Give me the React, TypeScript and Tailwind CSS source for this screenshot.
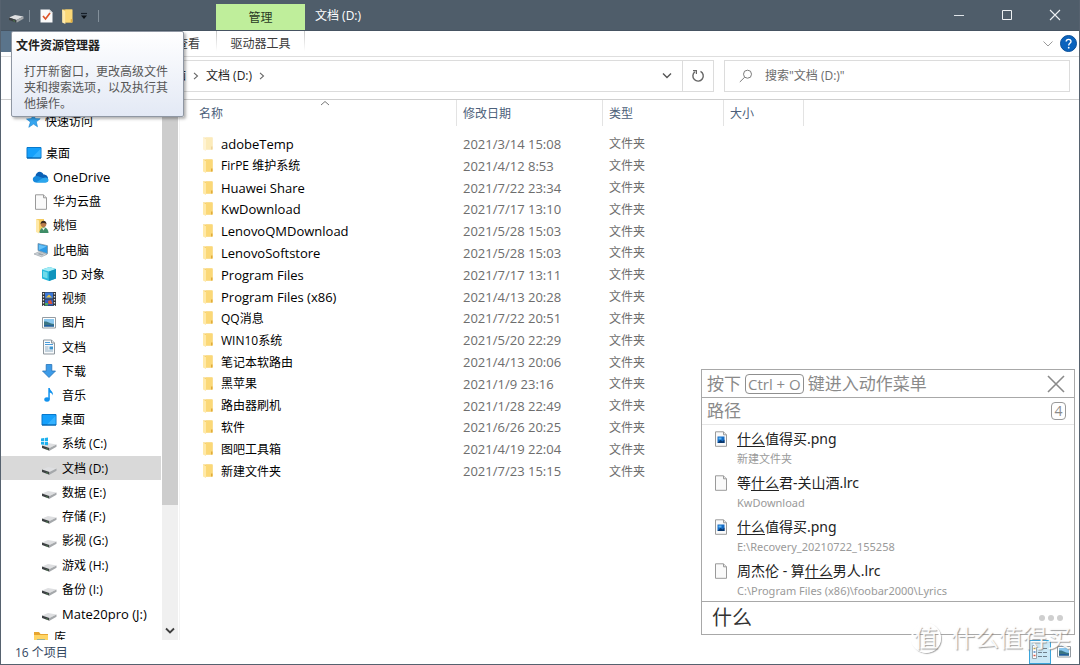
import { ReactNode } from 'react';

type NavItem = { label: string; icon: ReactNode; level: 1 | 2 | 3; latin?: boolean; active?: boolean };
type FileRow = { name: string; date: string; latin?: boolean; faded?: boolean };

const navItems: NavItem[] = [
  { label: '桌面', icon: <DesktopIcon />, level: 1 },
  { label: 'OneDrive', icon: <CloudIcon />, level: 2, latin: true },
  { label: '华为云盘', icon: <BlankFileIcon />, level: 2 },
  { label: '姚恒', icon: <UserFolderIcon />, level: 2 },
  { label: '此电脑', icon: <ComputerIcon />, level: 2 },
  { label: '3D 对象', icon: <CubeIcon />, level: 3 },
  { label: '视频', icon: <VideoIcon />, level: 3 },
  { label: '图片', icon: <PictureIcon />, level: 3 },
  { label: '文档', icon: <DocumentIcon />, level: 3 },
  { label: '下载', icon: <DownloadIcon />, level: 3 },
  { label: '音乐', icon: <MusicIcon />, level: 3 },
  { label: '桌面', icon: <DesktopIcon />, level: 3 },
  { label: '系统 (C:)', icon: <DriveIcon system />, level: 3 },
  { label: '文档 (D:)', icon: <DriveIcon />, level: 3, active: true },
  { label: '数据 (E:)', icon: <DriveIcon />, level: 3 },
  { label: '存储 (F:)', icon: <DriveIcon />, level: 3 },
  { label: '影视 (G:)', icon: <DriveIcon />, level: 3 },
  { label: '游戏 (H:)', icon: <DriveIcon />, level: 3 },
  { label: '备份 (I:)', icon: <DriveIcon />, level: 3 },
  { label: 'Mate20pro (J:)', icon: <DriveIcon />, level: 3, latin: true },
  { label: '库', icon: <LibraryIcon />, level: 2 },
];

const files: FileRow[] = [
  { name: 'adobeTemp', date: '2021/3/14 15:08', latin: true, faded: true },
  { name: 'FirPE 维护系统', date: '2021/4/12 8:53' },
  { name: 'Huawei Share', date: '2021/7/22 23:34', latin: true },
  { name: 'KwDownload', date: '2021/7/17 13:10', latin: true },
  { name: 'LenovoQMDownload', date: '2021/5/28 15:03', latin: true },
  { name: 'LenovoSoftstore', date: '2021/5/28 15:03', latin: true },
  { name: 'Program Files', date: '2021/7/17 13:11', latin: true },
  { name: 'Program Files (x86)', date: '2021/4/13 20:28', latin: true },
  { name: 'QQ消息', date: '2021/7/22 20:51' },
  { name: 'WIN10系统', date: '2021/5/20 22:29' },
  { name: '笔记本软路由', date: '2021/4/13 20:06' },
  { name: '黑苹果', date: '2021/1/9 23:16' },
  { name: '路由器刷机', date: '2021/1/28 22:49' },
  { name: '软件', date: '2021/6/26 20:25' },
  { name: '图吧工具箱', date: '2021/4/19 22:04' },
  { name: '新建文件夹', date: '2021/7/23 15:15' },
];

const results = [
  { before: '', after: '值得买.png', path: '新建文件夹', image: true },
  { before: '等', after: '君-关山酒.lrc', path: 'KwDownload', image: false },
  { before: '', after: '值得买.png', path: 'E:\\Recovery_20210722_155258', image: true },
  { before: '周杰伦 - 算', after: '男人.lrc', path: 'C:\\Program Files (x86)\\foobar2000\\Lyrics', image: false },
];

const indent = { 1: 'pl-6', 2: 'pl-[31px]', 3: 'pl-[39px]' };

export default function App() {
  return (
    <div className="relative flex h-screen flex-col overflow-hidden border-x border-b border-[#56626f] bg-white font-['Open_Sans','Noto_Sans_CJK_SC',sans-serif] text-xs text-black">
      <TitleBar />
      <RibbonTabs />
      <AddressBar />
      <div className="flex min-h-0 flex-1 border-t border-[#cfcfcf]">
        <Sidebar />
        <FileList />
      </div>
      <StatusBar />
      <Tooltip />
      <SearchPopup />
      <Watermark />
    </div>
  );
}

function TitleBar() {
  return (
    <header className="flex h-[31px] shrink-0 items-stretch border-b border-[#465462] bg-[#4f5d6a] text-white">
      <div className="flex w-[215px] items-center pt-0.5 pl-1.5">
        <DriveIcon />
        <span className="ml-1 h-3 w-px bg-[#83909b]" />
        <button aria-label="属性" className="ml-2.5"><CheckPageIcon /></button>
        <button aria-label="新建文件夹" className="ml-2"><FolderIcon large /></button>
        <button aria-label="自定义快速访问工具栏" className="ml-1.5">
          <svg width="8" height="8" viewBox="0 0 8 8"><path d="M1 1.5h6" stroke="#17202a" strokeWidth="1.2" /><path d="M1 3.5h6L4 7z" fill="#0c1116" /></svg>
        </button>
        <span className="ml-2.5 h-3 w-px bg-[#83909b]" />
      </div>
      <div className="mt-1 flex w-[89px] items-center justify-center bg-[#bfee9b] pt-0.5 text-[#2a3a24]">管理</div>
      <h1 className="flex flex-1 items-center pt-0.5 pl-2.5">文档 (D:)</h1>
      <button aria-label="最小化" className="flex w-12 items-center justify-center">
        <svg width="12" height="12" viewBox="0 0 12 12"><path d="M1 6.500h10" stroke="#dfe4e8" /></svg>
      </button>
      <button aria-label="最大化" className="flex w-12 items-center justify-center">
        <svg width="12" height="12" viewBox="0 0 12 12"><path d="M1.5 1.5h9v9h-9z" fill="none" stroke="#eef1f3" /></svg>
      </button>
      <button aria-label="关闭" className="flex w-12 items-center justify-center">
        <svg width="12" height="12" viewBox="0 0 12 12"><path d="M1 1l10 10M11 1L1 11" stroke="#eef1f3" strokeWidth="1.1" /></svg>
      </button>
    </header>
  );
}

function RibbonTabs() {
  return (
    <nav className="flex h-[26px] shrink-0 border-b border-[#dedede] text-[#3b3b3b]">
      <button aria-label="文件" className="mb-1 w-[51px] bg-[#5a748b]" />
      <button aria-label="主页" className="w-[54px]" />
      <button aria-label="共享" className="w-[54px]" />
      <button className="w-14">查看</button>
      <span className="h-5 w-px bg-linear-to-b from-[#c8c8c8] to-white" />
      <button className="w-[87px]">驱动器工具</button>
      <span className="h-5 w-px bg-linear-to-b from-[#c8c8c8] to-white" />
      <button aria-label="展开功能区" className="ml-auto">
        <svg width="12" height="8" viewBox="0 0 12 8"><path d="M1.5 1.5L6 6l4.500-4.500" fill="none" stroke="#9a9a9a" /></svg>
      </button>
      <button aria-label="帮助" className="mr-0.5 ml-1.5">
        <svg width="17" height="17" viewBox="0 0 17 17">
          <circle cx="8.500" cy="8.500" r="8" fill="#0b63bd" stroke="#0a4f98" />
          <path d="M6.200 6.600c0-3 4.800-2.900 4.800-.2 0 1.800-2.300 1.900-2.300 4" fill="none" stroke="#fff" strokeWidth="1.400" />
          <circle cx="8.700" cy="12.700" r=".9" fill="#fff" />
        </svg>
      </button>
    </nav>
  );
}

function AddressBar() {
  return (
    <div className="flex shrink-0 pt-[3px] pr-[9px] pb-[7px]">
      <div className="w-[106px]" />
      <div className="flex h-8 flex-1 items-center border border-[#dcdcdc] text-[#1e1e1e]">
        <button className="w-[78px] text-right">此电脑</button>
        <Crumb />
        <button>文档 (D:)</button>
        <Crumb />
        <button aria-label="历史记录" className="ml-auto px-2.5">
          <svg width="10" height="8" viewBox="0 0 10 8"><path d="M1 1.500l4 4 4-4" fill="none" stroke="#555" strokeWidth="1.400" /></svg>
        </button>
        <button aria-label="刷新" className="flex h-full w-[31px] items-center justify-center border-l border-[#dcdcdc]">
          <svg width="14" height="14" viewBox="0 0 14 14">
            <path d="M9.500 2.300A5.200 5.200 0 1 1 4 2.700" fill="none" stroke="#666" strokeWidth="1.400" />
            <path d="M2 1.700h3.400v3.400" fill="none" stroke="#666" strokeWidth="1.200" />
          </svg>
        </button>
      </div>
      <label className="ml-2.5 flex h-8 w-[346px] items-center border border-[#dcdcdc] pl-3.5">
        <svg width="14" height="14" viewBox="0 0 14 14"><circle cx="8.500" cy="5.200" r="4" fill="none" stroke="#7c7c7c" /><path d="M5.700 8.200L.8 13" stroke="#7c7c7c" /></svg>
        <input aria-label="搜索" placeholder={'搜索"文档 (D:)"'} className="ml-3 flex-1 outline-none placeholder:text-[#6b6b6b]" />
      </label>
    </div>
  );
}

function Crumb() {
  return (
    <svg className="mx-[7px] shrink-0" width="6" height="8" viewBox="0 0 6 8"><path d="M1 .8L4.500 4 1 7.200" fill="none" stroke="#666" strokeWidth="1.100" /></svg>
  );
}

// Latin names are set one step larger than Chinese ones, on the same baseline
function Label({ latin, children }: { latin?: boolean; children: ReactNode }) {
  return (
    <span className="text-[13px] leading-4 whitespace-nowrap">
      <span className={latin ? '' : 'text-xs leading-4'}>{children}</span>
    </span>
  );
}

function Sidebar() {
  return (
    <aside className="flex w-[179px] shrink-0 border-r border-[#f4f4f4]">
      <nav className="w-[160px] overflow-hidden pt-[9px]">
        <a href="#quick" className="flex h-6 items-center gap-1 pl-6"><StarIcon /><Label>快速访问</Label></a>
        <ul className="mt-2 grid h-[509px] auto-rows-fr">
          {navItems.map((item, i) => (
            <li key={i} className={item.active ? 'bg-[#d9d9d9]' : ''}>
              <a href="#folder" className={`flex h-full items-center gap-1 ${indent[item.level]}`}>
                {item.icon}
                <Label latin={item.latin}>{item.label}</Label>
              </a>
            </li>
          ))}
        </ul>
      </nav>
      <div className="ml-px flex w-4 flex-col bg-[#f0f0f0]">
        <div className="h-3/4 bg-[#cdcdcd]" />
        <button aria-label="向下滚动" className="mt-auto flex h-[18px] items-center justify-center">
          <svg width="10" height="8" viewBox="0 0 10 8"><path d="M1 1.500l4 4 4-4" fill="none" stroke="#404040" strokeWidth="1.800" /></svg>
        </button>
      </div>
    </aside>
  );
}

function FileList() {
  return (
    <main className="relative min-w-0 flex-1 overflow-hidden">
      <svg className="absolute top-0 left-[140px]" width="10" height="6" viewBox="0 0 10 6"><path d="M1 5l4-3.500L9 5" fill="none" stroke="#777" /></svg>
      <table className="h-[382px] w-[624px] table-fixed border-collapse text-left">
        <thead>
          <tr className="h-[33px] align-top text-[#4c607a]">
            <HeadCell width="w-[277px]" pad="pl-[19px]">名称</HeadCell>
            <HeadCell width="w-[146px]" pad="pl-1.5">修改日期</HeadCell>
            <HeadCell width="w-[121px]" pad="pl-1.5">类型</HeadCell>
            <HeadCell width="w-20" pad="pl-1.5">大小</HeadCell>
          </tr>
        </thead>
        <tbody>
          {files.map((f) => (
            <tr key={f.name}>
              <td className="p-0 pl-[22px]">
                <div className="flex items-center gap-[7px]">
                  <FolderIcon faded={f.faded} />
                  <Label latin={f.latin}>{f.name}</Label>
                </div>
              </td>
              <td className="p-0 pl-1.5 text-[#6d6d6d]"><div className="flex"><Label latin>{f.date}</Label></div></td>
              <td className="p-0 pl-1.5 text-[#6d6d6d]"><div className="flex"><Label>文件夹</Label></div></td>
              <td />
            </tr>
          ))}
        </tbody>
      </table>
    </main>
  );
}

function HeadCell({ width, pad, children }: { width: string; pad: string; children: ReactNode }) {
  return (
    <th className={`p-0 font-normal ${width}`}>
      <div className={`flex h-[26px] items-center border-r border-[#e3e3e3] pt-0.5 ${pad}`}>{children}</div>
    </th>
  );
}

function StatusBar() {
  return (
    <footer className="flex h-6 shrink-0 items-center pr-1.5 pl-3.5 text-[#33475f]">
      <Label>16 个项目</Label>
      <button aria-label="详细信息" className="ml-auto flex h-full w-[22px] items-center justify-center border border-[#3ba5dc] bg-[#cbe8f6]">
        <svg width="16" height="14" viewBox="0 0 16 14">
          <path d="M.5.5h4v13h-4z" fill="#fff" stroke="#9aa5ad" />
          <path d="M1.500 3.500h2" stroke="#b8a24a" strokeWidth="1.500" /><path d="M1.500 7h2" stroke="#4a88c8" strokeWidth="1.500" /><path d="M1.500 10.500h2" stroke="#d85a4a" strokeWidth="1.500" />
          <path d="M6 3.500h4m1 0h4M6 7.500h4m1 0h4M6 11.500h4m1 0h4" stroke="#71808c" />
        </svg>
      </button>
      <button aria-label="大缩略图" className="ml-1"><PictureIcon /></button>
    </footer>
  );
}

function Tooltip() {
  return (
    <div role="tooltip" className="absolute top-[31px] left-2.5 w-[173px] rounded-xs border border-[#8f97a3] bg-linear-to-b from-white to-[#e3e9f5] px-1 pt-1 pb-1 shadow-[2px_2px_3px_rgba(0,0,0,0.3)]">
      <p className="leading-5 font-bold text-[#222]">文件资源管理器</p>
      <p className="mt-2 pl-2 leading-4 text-[#575757]">打开新窗口，更改高级文件<br />夹和搜索选项，以及执行其<br />他操作。</p>
    </div>
  );
}

function SearchPopup() {
  return (
    <section className="absolute right-1 bottom-[29px] w-[374px] border border-[#a8a8a8] bg-white">
      <div className="flex h-7 items-center border-b border-[#a8a8a8] pr-2 pl-[5px] text-[17px] leading-6 text-[#8a8a8a]">
        按下
        <kbd className="mx-1 flex h-5 items-center rounded-sm border border-[#8f8f8f] px-0.5 font-['Open_Sans',sans-serif] text-[15px]">Ctrl + O</kbd>
        键进入动作菜单
        <button aria-label="关闭" className="ml-auto">
          <svg width="20" height="20" viewBox="0 0 20 20"><path d="M2 2l16 16M18 2L2 18" stroke="#8a8a8a" strokeWidth="1.600" /></svg>
        </button>
      </div>
      <div className="flex h-[27px] items-center justify-between border-b border-[#e6e6e6] pr-2 pl-[5px] text-[17px] text-[#8a8a8a]">
        路径
        <span className="flex h-[18px] w-[15px] items-center justify-center rounded-sm border border-[#999] text-sm">4</span>
      </div>
      <ul className="h-44">
        {results.map((r, i) => (
          <li key={i} className="flex h-11 gap-2 pl-2.5">
            <span className="pt-1.5">{r.image ? <ImageFileIcon /> : <BlankFileIcon />}</span>
            <div className="font-['Noto_Sans','Noto_Sans_CJK_SC',sans-serif] whitespace-nowrap">
              <p className="pt-1 text-sm leading-5 text-[#222]">{r.before}<span className="underline underline-offset-2">什么</span>{r.after}</p>
              <p className="pt-0.5 text-[11px] leading-4 text-[#9a9a9a]">{r.path}</p>
            </div>
          </li>
        ))}
      </ul>
      <div className="flex h-[33px] items-center border-t border-[#a8a8a8] pr-2.5 pl-2.5">
        <input aria-label="搜索文件" defaultValue="什么" className="min-w-0 flex-1 text-xl leading-7 text-[#333] outline-none" />
        <button aria-label="更多">
          <svg width="26" height="8" viewBox="0 0 26 8" fill="#cfcfcf"><circle cx="4" cy="4" r="3" /><circle cx="13" cy="4" r="3" /><circle cx="22" cy="4" r="3" /></svg>
        </button>
      </div>
    </section>
  );
}

function Watermark() {
  return (
    <div className="pointer-events-none absolute right-2 bottom-2.5 flex items-center gap-2.5 text-2xl leading-8 text-white/90 [text-shadow:1px_1px_1px_rgba(120,120,120,0.7)]">
      <span className="flex size-[30px] items-center justify-center rounded-full border-2 border-white shadow-[1px_1px_1px_rgba(120,120,120,0.6)]">值</span>
      什么值得买
    </div>
  );
}

/* icons */

function FolderIcon({ faded, large }: { faded?: boolean; large?: boolean }) {
  return (
    <svg className={faded ? 'opacity-50' : ''} width={large ? 13 : 12} height={large ? 15 : 14} viewBox="0 0 12 14">
      <path d="M1 .5h9.500v12H3z" fill="#f3c95f" />
      <path d="M4 .5h6.500v12H4z" fill="#fbd877" />
      <path d="M1 .5l3 1.500v12l-3-1.500z" fill="#ffe9a8" />
      <path d="M9 9.500h1.500v3H9z" fill="#e0ab3c" />
    </svg>
  );
}

function CheckPageIcon() {
  return (
    <svg width="13" height="14" viewBox="0 0 13 14">
      <path d="M.5.5h9l3 3v10h-12z" fill="#fafafa" />
      <path d="M9.500.5v3h3" fill="#d5d5d5" />
      <path d="M3 7l2.500 3L10 4" fill="none" stroke="#dd5428" strokeWidth="1.700" />
    </svg>
  );
}

function DriveIcon({ system }: { system?: boolean }) {
  return (
    <svg className="shrink-0" width="18" height="16" viewBox="0 0 18 16">
      <path d="M2 9.500l6-2.500 8.500 1.500L9.500 12z" fill="#dedfe1" />
      <path d="M2 9.500l7.500 2.500v2.800L2 12z" fill="#3d4143" />
      <path d="M9.500 12l7-3.500v2.300l-7 4z" fill="#a5a8ab" />
      <path d="M6.500 12.800l1.200.4" stroke="#58a458" />
      {system && <path d="M1 2.500l3-.4v3H1zM4.700 2l3.300-.5v3.600H4.700zM1 5.800h3v3L1 8.400zM4.700 5.800H8v3.500l-3.300-.4z" fill="#1cb0ee" />}
    </svg>
  );
}

function StarIcon() {
  return (
    <svg width="16" height="16" viewBox="0 0 16 16"><path d="M8.500 1l1.700 4.600 5 .2-3.900 3 1.200 5-4-2.700-4.700 3.200 1.600-5.300L1.500 6l4.900-.4z" fill="#36a5ef" stroke="#1583d0" strokeWidth=".6" /></svg>
  );
}

function DesktopIcon() {
  return (
    <svg className="shrink-0" width="17" height="14" viewBox="0 0 17 14">
      <path d="M2 1.500h14v10.500H2z" fill="#15a0fb" stroke="#0879cc" />
      <path d="M7 11.500L15.500 3v8.500z" fill="#35b2ff" />
      <path d="M2 12h14" stroke="#045fa5" />
    </svg>
  );
}

function CloudIcon() {
  return (
    <svg className="shrink-0" width="17" height="14" viewBox="0 0 17 14">
      <path d="M3.500 6C4 1.500 9.500 0 11.500 4.500c3 0 5 2.300 4.500 5H4z" fill="#0a60b5" />
      <path d="M4 12.500c-4 0-4.500-6 0-6.500 2.500-.2 5 1.500 9 2.500 3.500-.5 4.500 4 0 4z" fill="#1689dc" />
      <path d="M4 12.500l7-4.500c2.500-1.300 5.500-.3 5.500 2 0 1.500-1 2.500-3 2.500z" fill="#2aa6ed" />
    </svg>
  );
}

function BlankFileIcon() {
  return (
    <svg className="shrink-0" width="17" height="16" viewBox="0 0 17 16">
      <path d="M3.500.8h8l3 3v11.500h-11z" fill="#fafafa" stroke="#9a9a9a" />
      <path d="M11.500.8v3h3" fill="#e5e5e5" stroke="#9a9a9a" />
    </svg>
  );
}

function ImageFileIcon() {
  return (
    <svg width="17" height="16" viewBox="0 0 17 16">
      <path d="M3.500.8h8l3 3v11.500h-11z" fill="#fafafa" stroke="#9a9a9a" />
      <path d="M11.500.8v3h3" fill="#e5e5e5" stroke="#9a9a9a" />
      <path d="M5.500 5.500h7v6.500h-7z" fill="#156bc4" />
      <path d="M5.500 12l3-3 2 1.500 2-2V12z" fill="#0b376b" />
      <path d="M6.500 6.500h3v2h-3z" fill="#5fb8f5" />
    </svg>
  );
}

function UserFolderIcon() {
  return (
    <svg className="shrink-0" width="17" height="16" viewBox="0 0 17 16">
      <path d="M4 1h8v13H6z" fill="#f5cd63" />
      <path d="M4 1l3 1.500v13L4 14z" fill="#ffe9a8" />
      <circle cx="11.500" cy="6.200" r="2.800" fill="#b97b4c" />
      <path d="M8.500 6c0-4.500 6-4.500 6 0-1.500-1.500-4.500-1.500-6 0z" fill="#3c2c22" />
      <path d="M7.500 15c0-7.500 9-7.500 9 0z" fill="#3f8d67" />
      <path d="M10 10h3l-1.500 2.500z" fill="#e9eee8" />
    </svg>
  );
}

function ComputerIcon() {
  return (
    <svg className="shrink-0" width="17" height="16" viewBox="0 0 17 16">
      <path d="M6 1.500l9.500 2.200v8L6 8.500z" fill="#2d9be6" stroke="#7894a8" strokeWidth=".8" />
      <path d="M7 2.800l7.500 1.700L7 8z" fill="#67c2f8" />
      <path d="M2 12l5-2.300 8 2.600-5.500 2.500z" fill="#d3d8dc" stroke="#8f989f" strokeWidth=".6" />
      <path d="M5 12l2.500-1 4.500 1.500-2 1z" fill="#9ca5ac" />
    </svg>
  );
}

function CubeIcon() {
  return (
    <svg className="shrink-0" width="18" height="16" viewBox="0 0 18 16">
      <path d="M2 3.500L9.500 1 16 3v9.500L9 15l-7-2.500z" fill="#26b9dc" />
      <path d="M2 3.500L9.500 1 16 3 9 5.500z" fill="#a4ecf5" />
      <path d="M9 5.500L16 3v9.500L9 15z" fill="#1094bd" />
      <path d="M3 5l4.500 1.500v6L3 11z" fill="#6edbea" />
    </svg>
  );
}

function VideoIcon() {
  return (
    <svg className="shrink-0" width="18" height="16" viewBox="0 0 18 16">
      <path d="M2 1h14v14H2z" fill="#34383d" />
      <path d="M5 1.500h8v6H5z" fill="#3c78d8" /><path d="M5 8.500h8v6H5z" fill="#315fc0" />
      <path d="M6 6.500l3-3 3 3z" fill="#e8c340" /><path d="M8 10l3-1 1.500 4h-4z" fill="#d65436" /><path d="M5 12h3v2.500H5z" fill="#4ba862" />
      <path d="M3.500 2v13M14.500 2v13" stroke="#e4e4e4" strokeWidth="1.300" strokeDasharray="1.500 1.500" />
    </svg>
  );
}

function PictureIcon() {
  return (
    <svg className="shrink-0" width="18" height="14" viewBox="0 0 18 14">
      <path d="M2.500 1.500h13v10.500h-13z" fill="#fff" stroke="#949ca3" />
      <path d="M4 3h10v7.500H4z" fill="#8bc8ef" />
      <path d="M4 5.500c4-.5 5 2 10 2.500v2.500H4z" fill="#3b7584" />
      <path d="M4 9.500c4-1 6 0 10 0v1H4z" fill="#215ba0" />
    </svg>
  );
}

function DocumentIcon() {
  return (
    <svg className="shrink-0" width="18" height="16" viewBox="0 0 18 16">
      <path d="M3.500 1h8l3 3v11h-11z" fill="#f8fafc" stroke="#8d969d" />
      <path d="M11.500 1v3h3" fill="#dde2e5" stroke="#8d969d" />
      <path d="M5 3.500h5M5 5.500h8" stroke="#4a9bd8" />
      <path d="M5 8h3.500M5 10h3.500M5 12h8" stroke="#8eabc0" /><path d="M9.500 7.500H13v3H9.500z" fill="#3e95cf" />
    </svg>
  );
}

function DownloadIcon() {
  return (
    <svg className="shrink-0" width="18" height="16" viewBox="0 0 18 16"><path d="M6.200 1.500h5.600V8h3.700L9 14.500 2.500 8h3.700z" fill="#3c9be8" stroke="#2472b8" strokeWidth=".8" /></svg>
  );
}

function MusicIcon() {
  return (
    <svg className="shrink-0" width="18" height="16" viewBox="0 0 18 16">
      <ellipse cx="7" cy="12.500" rx="2.700" ry="2.200" fill="#1192ee" />
      <path d="M8.300 1h1.500c.2 2.700 3.700 3.600 3.200 7.500-.7-1.800-1.800-2.600-3.200-3v7H8.300z" fill="#1192ee" />
    </svg>
  );
}

function LibraryIcon() {
  return (
    <svg className="shrink-0" width="18" height="16" viewBox="0 0 18 16">
      <path d="M2 2h5l1.500 2H16v10H2z" fill="#e7a52f" />
      <path d="M2 5h14v9H2z" fill="#ffd565" />
      <path d="M5 14V9.500h8V14h-2v-2H7v2z" fill="#3292dc" />
    </svg>
  );
}
